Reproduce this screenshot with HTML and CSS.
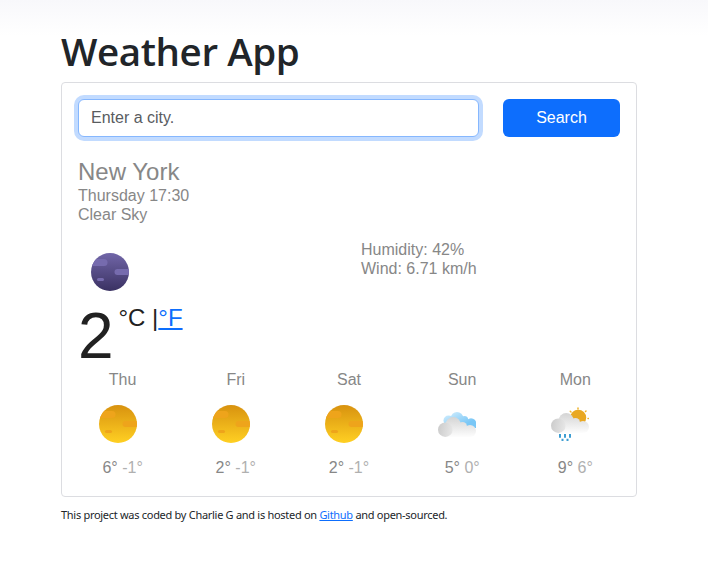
FILE: index.html
```html
<!DOCTYPE html>
<html lang="en">
<head>
<meta charset="utf-8">
<title>Weather App</title>
<link rel="stylesheet" href="styles.css">
</head>
<body>
<svg class="defs" aria-hidden="true">
  <defs>
    <linearGradient id="sunFill" x1="0" y1="0" x2="0" y2="1"><stop offset="0" stop-color="#d8920f"/><stop offset="1" stop-color="#ffd023"/></linearGradient>
    <linearGradient id="moonFill" x1="0" y1="0" x2="0" y2="1"><stop offset="0" stop-color="#7166a8"/><stop offset="1" stop-color="#3a3162"/></linearGradient>
    <linearGradient id="grayFill" gradientUnits="userSpaceOnUse" x1="0" y1="12" x2="0" y2="32"><stop offset="0" stop-color="#d4d4d4"/><stop offset="1" stop-color="#fdfdfd"/></linearGradient>
    <linearGradient id="puffFill" x1="0" y1="0.4" x2="1" y2="0.6"><stop offset="0" stop-color="#cccccc"/><stop offset="1" stop-color="#e7e7e7"/></linearGradient>
    <linearGradient id="blueFill" gradientUnits="userSpaceOnUse" x1="17" y1="7" x2="24" y2="21"><stop offset="0" stop-color="#c3e7fc"/><stop offset="1" stop-color="#7ac7f6"/></linearGradient>
    <clipPath id="disc"><circle cx="19" cy="19" r="19"/></clipPath>
    <g id="bands" clip-path="url(#disc)">
      <rect x="-6" y="6" width="22.5" height="7" rx="3.5"/>
      <rect x="23.5" y="16" width="20" height="6" rx="3"/>
      <rect x="6" y="25" width="7" height="3" rx="1.5"/>
    </g>
    <symbol id="sun" viewBox="0 0 38 38"><circle cx="19" cy="19" r="19" fill="url(#sunFill)"/><use href="#bands" fill="#eea41b"/></symbol>
    <symbol id="moon" viewBox="0 0 38 38"><circle cx="19" cy="19" r="19" fill="url(#moonFill)"/><use href="#bands" fill="#766bae"/></symbol>
    <g id="cloud">
      <g fill="url(#grayFill)">
        <circle cx="15.200" cy="19.500" r="7.500"/>
        <circle cx="24.500" cy="21.500" r="4.500"/>
        <circle cx="32" cy="26" r="6"/>
        <path d="M7.500 20H26L32 26V32H7.500Z"/>
      </g>
      <circle cx="7.300" cy="24.700" r="7.300" fill="url(#puffFill)"/>
    </g>
  </defs>
</svg>
<main class="container">
  <h1>Weather App</h1>
  <section class="card">
    <form class="search">
      <input type="text" placeholder="Enter a city.">
      <button type="button">Search</button>
    </form>
    <h2>New York</h2>
    <p>Thursday 17:30</p>
    <p>Clear Sky</p>
    <div class="current">
      <div>
        <svg class="icon now"><use href="#moon"/></svg>
        <div class="temperature"><span class="value">2</span><span class="units">°C |<a href="#">°F</a></span></div>
      </div>
      <div class="details"><p>Humidity: 42%</p><p>Wind: 6.71 km/h</p></div>
    </div>
    <div class="forecast">
      <div class="day"><p>Thu</p><svg class="icon"><use href="#sun"/></svg><p>6° <span>-1°</span></p></div>
      <div class="day"><p>Fri</p><svg class="icon"><use href="#sun"/></svg><p>2° <span>-1°</span></p></div>
      <div class="day"><p>Sat</p><svg class="icon"><use href="#sun"/></svg><p>2° <span>-1°</span></p></div>
      <div class="day"><p>Sun</p>
        <svg class="icon" viewBox="0 0 38 38">
          <g fill="url(#blueFill)">
            <circle cx="10.500" cy="15.500" r="5"/>
            <circle cx="19" cy="13.200" r="6.200"/>
            <circle cx="26.500" cy="14.500" r="3.600"/>
            <circle cx="33" cy="18.500" r="5.300"/>
            <path d="M14 16H30V24H14ZM31 18H38V23H31Z"/>
          </g>
          <use href="#cloud"/>
        </svg>
        <p>5° <span>0°</span></p></div>
      <div class="day"><p>Mon</p>
        <svg class="icon" viewBox="0 0 38 38">
          <path stroke="#efb42b" stroke-width="1.500" stroke-linecap="round" d="M27 3V4M19.300 6.300L20 7M34.500 6.500L35 6M37 13.500H37.500"/>
          <circle cx="27.200" cy="12.700" r="8" fill="#e9a822"/>
          <use href="#cloud" transform="translate(0 -4)"/>
          <path stroke="#3c9dd2" stroke-width="2" d="M9 29V32.700M14 29V32.700M19 29V32.700M11.500 33.700V36M16.500 33.700V36"/>
        </svg>
        <p>9° <span>6°</span></p></div>
    </div>
  </section>
  <footer>This project was coded by Charlie G and is hosted on <a href="#">Github</a> and open-sourced.</footer>
</main>
</body>
</html>
```
FILE: styles.css
```css
* { box-sizing: border-box; }
body {
  margin: 0;
  min-height: 575px;
  background: linear-gradient(#f8f8fb, #fff 36px);
  color: #212529;
  font: 16px/19px "Liberation Sans", Arial, sans-serif;
}
.defs { position: absolute; width: 0; height: 0; }
.container { width: 576px; margin-left: 61px; padding-top: 28px; }
h1, h2, p { margin: 0; }
h1 {
  height: 54px;
  font: 600 38.5px/47px "Open Sans", "Noto Sans", sans-serif;
  letter-spacing: -0.4px;
  white-space: nowrap;
}
.card {
  height: 415px;
  padding: 16px;
  border: 1px solid #dcdde1;
  border-radius: 4px;
  background: #fff;
  color: #878787;
}
.search { display: flex; gap: 24px; margin-bottom: 20px; }
.search input {
  width: 401px;
  height: 38px;
  padding: 0 12px;
  border: 1px solid #86b7fe;
  border-radius: 6px;
  outline: 0;
  box-shadow: 0 0 0 4px #c2dbff;
  font: inherit;
}
.search input::placeholder { color: #595c5f; opacity: 1; }
.search button {
  width: 117px;
  height: 38px;
  padding: 0 0 2px;
  border: 0;
  border-radius: 6px;
  background: #0d6efd;
  color: #fff;
  font: inherit;
}
h2 { font-size: 24px; font-weight: 400; line-height: 29px; margin-top: 2px; }
.current { display: grid; grid-template-columns: 283px 1fr; height: 130px; margin-top: 16px; }
.icon { display: block; width: 38px; height: 38px; }
.now { margin: 13px 0 0 13px; }
.temperature { display: flex; color: #212121; }
.value { width: 40.5px; font-size: 64px; line-height: 74px; margin-top: 8px; }
.units { font-size: 24px; line-height: 28px; margin-top: 13px; }
a { color: #0d6efd; }
.forecast { display: grid; grid-template-columns: repeat(5, 113.2px); margin: 0 -12px; }
.day { text-align: center; }
.day .icon { margin: 16px 0 15px 32.6px; }
.day span { color: #b0b0b0; }
footer { margin-top: 10px; font: 11px/15px "Noto Sans", "Open Sans", sans-serif; letter-spacing: -0.29px; white-space: nowrap; }
```
